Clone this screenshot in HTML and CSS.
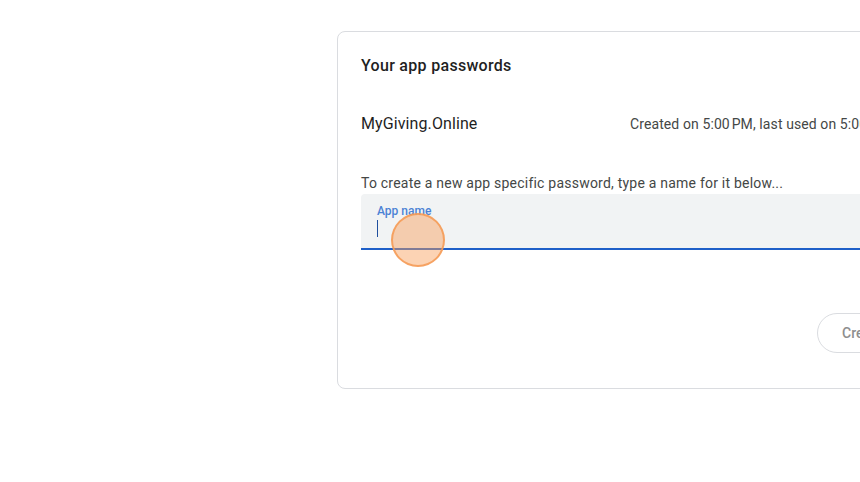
FILE: index.html
```html
<!DOCTYPE html>
<html lang="en">
<head>
<meta charset="utf-8">
<title>App passwords</title>
<link rel="stylesheet" href="styles.css">
</head>
<body>
<div class="page">
  <section class="card">
    <h2 class="card-title">Your app passwords</h2>
    <div class="pw-row">
      <span class="pw-name">MyGiving.Online</span>
      <span class="pw-meta">Created on 5:00&#8239;PM, last used on 5:00&#8239;PM</span>
    </div>
    <p class="hint">To create a new app specific password, type a name for it below...</p>
    <div class="field">
      <label class="field-label" for="appname">App name</label>
      <div class="field-input"><span class="caret"></span></div>
      <span class="click-dot"></span>
    </div>
    <div class="actions">
      <button class="btn-create" type="button">Create</button>
    </div>
  </section>
</div>
</body>
</html>
```
FILE: styles.css
```css
html, body {
  margin: 0;
  padding: 0;
  background: #ffffff;
}
body {
  width: 860px;
  height: 482px;
  overflow: hidden;
  font-family: Roboto, "Liberation Sans", Arial, sans-serif;
  color: #1f1f1f;
}
.page {
  padding: 31px 0 0 337px;
}
.card {
  width: 620px;
  box-sizing: border-box;
  border: 1px solid #dadce0;
  border-radius: 8px;
  padding: 22px 24px 35px 23px;
}
.card-title {
  margin: 0;
  font-size: 16px;
  line-height: 24px;
  font-weight: 500;
  letter-spacing: 0.3px;
  color: #1f1f1f;
}
.pw-row {
  display: grid;
  grid-template-columns: 269px auto;
  align-items: center;
  margin-top: 33px;
  white-space: nowrap;
}
.pw-name {
  font-size: 16px;
  line-height: 24px;
  letter-spacing: 0.1px;
  color: #1f1f1f;
}
.pw-meta {
  font-size: 14px;
  line-height: 24px;
  letter-spacing: 0.1px;
  color: #444746;
  padding-top: 1px;
}
.hint {
  margin: 37px 0 0;
  font-size: 14px;
  line-height: 20px;
  letter-spacing: 0.22px;
  color: #444746;
  white-space: nowrap;
}
.field {
  position: relative;
  margin-top: 1px;
  height: 56px;
  box-sizing: border-box;
  background: #f1f3f4;
  border-radius: 4px 4px 0 0;
  border-bottom: 2px solid #1e5fc8;
  padding: 10px 16px 0;
  width: 572px;
}
.field-label {
  display: block;
  font-size: 12px;
  line-height: 14px;
  font-weight: 500;
  color: #4b82d4;
}
.field-input {
  height: 24px;
  padding-top: 2px;
}
.caret {
  display: block;
  width: 1px;
  height: 17px;
  background: #1f4f9e;
}
.click-dot {
  position: absolute;
  left: 30px;
  top: 19px;
  width: 50px;
  height: 50px;
  border-radius: 50%;
  background: rgba(248, 158, 88, 0.45);
  border: 2px solid rgba(244, 154, 84, 0.85);
}
.actions {
  padding: 63px 0 0 456px;
}
.btn-create {
  height: 40px;
  padding: 0 24px;
  border: 1px solid #dadce0;
  border-radius: 20px;
  background: #ffffff;
  font-family: Roboto, "Liberation Sans", Arial, sans-serif;
  font-size: 14px;
  font-weight: 500;
  color: #8e8e8e;
  white-space: nowrap;
}
```
